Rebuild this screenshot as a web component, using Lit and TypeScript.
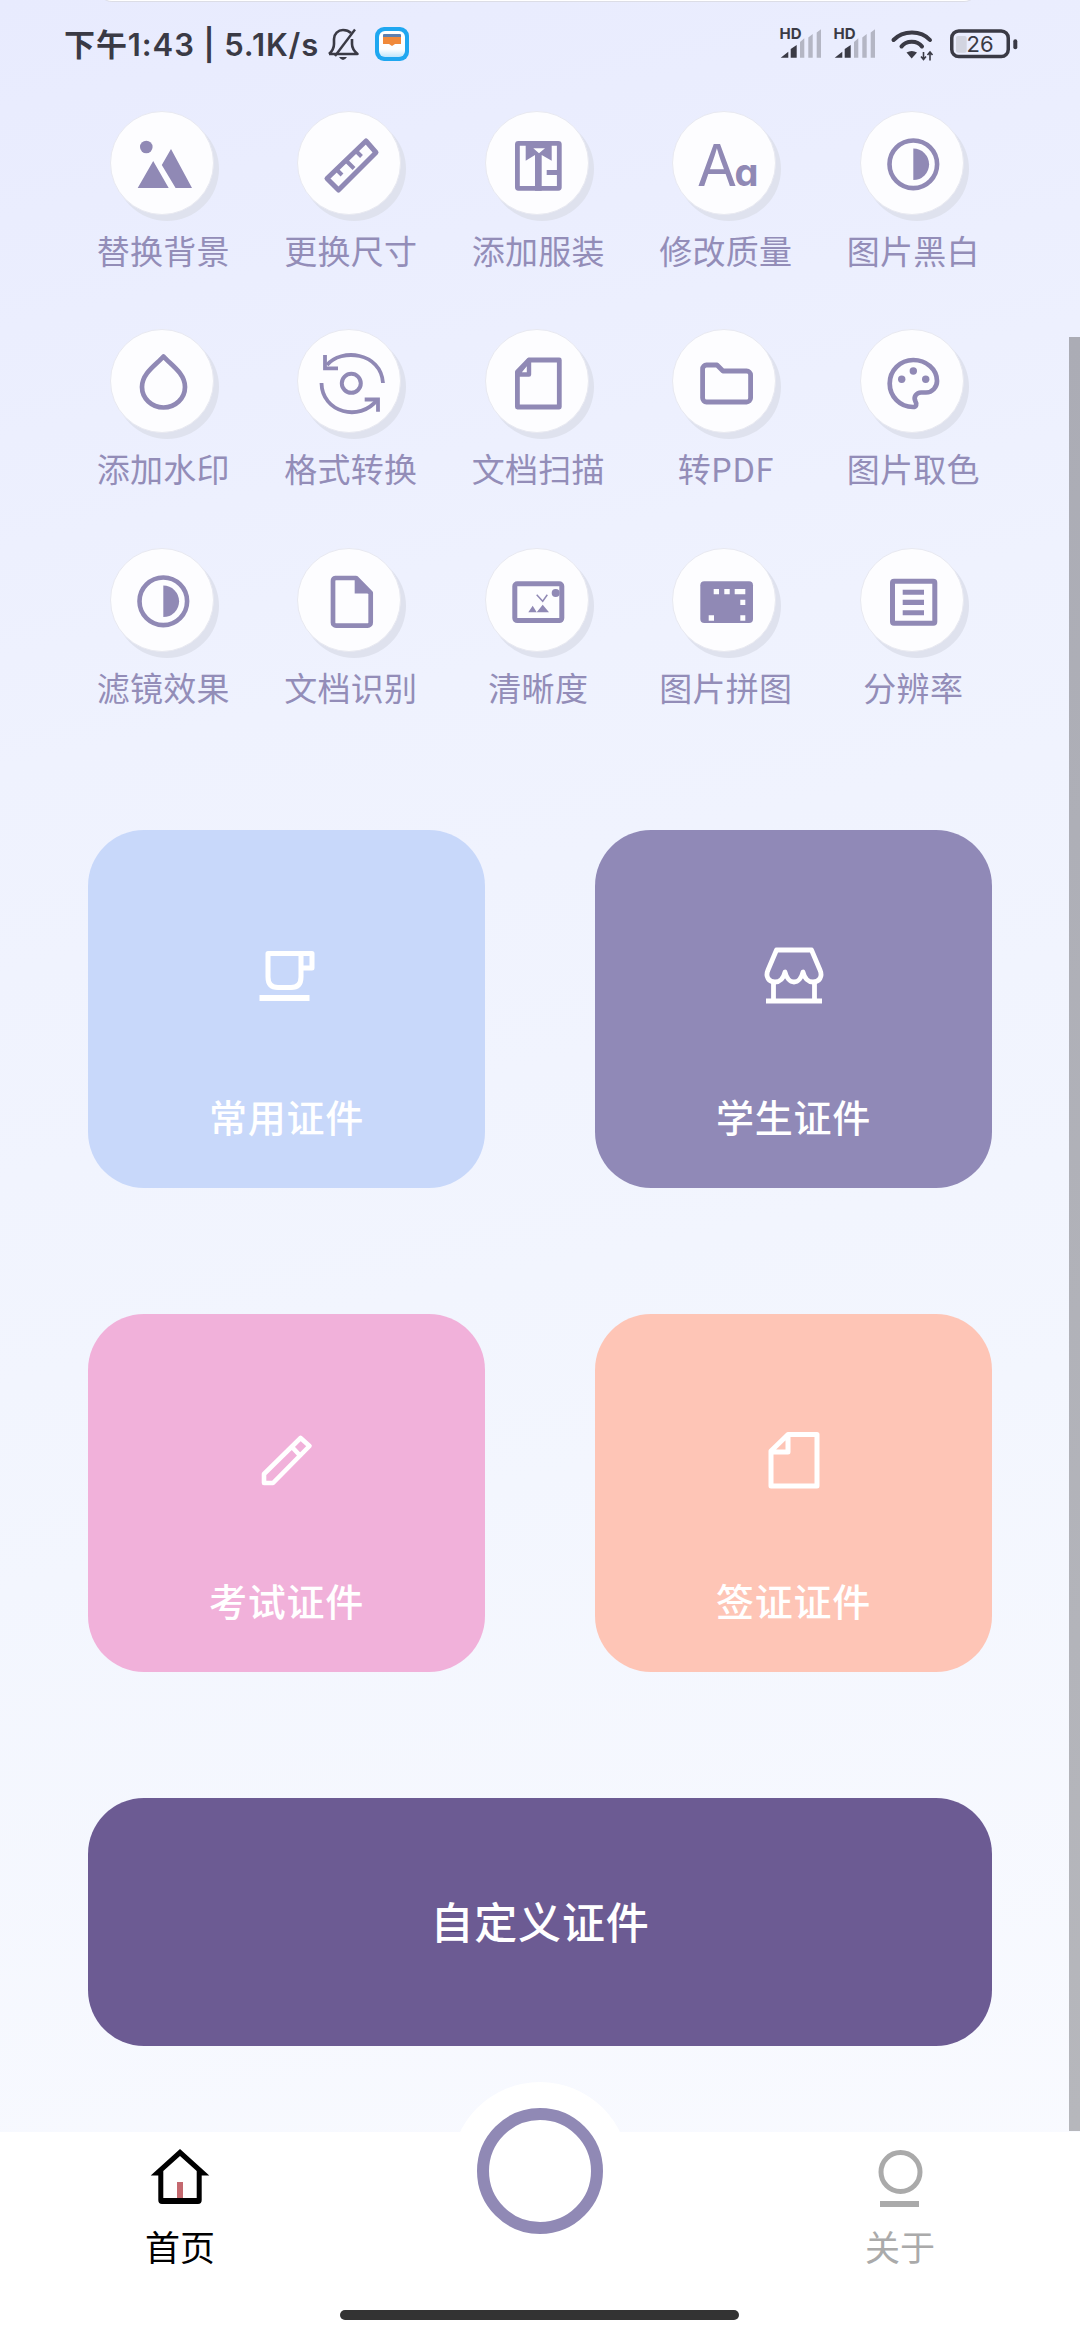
import { LitElement, html, css, svg } from 'lit';
import { customElement } from 'lit/decorators.js';

const INK = '#9089b5';

const half = svg`
  <circle cx="53.3" cy="53.3" r="23.8" fill="none" stroke=${INK} stroke-width="4.6"/>
  <path d="M53.3 37.5 A15.8 15.8 0 0 1 53.3 69.1 Z" fill=${INK}/>`;

const ICONS: Record<string, unknown> = {
  mountain: svg`
    <circle cx="36.3" cy="36" r="6.3" fill=${INK}/>
    <path d="M27.7 77 L43.2 50 L58.7 77 Z M61 38 L82 77 H65.6 L51.8 54 Z" fill=${INK}/>`,
  ruler: svg`
    <path d="M68 30 L78 41.5 L40.5 79 L29 67.5 Z" fill="none" stroke=${INK} stroke-width="5" stroke-linejoin="round"/>
    <path d="M38.5 58.5 L44 64 M48 49.5 L56 57.5 M58 40 L63.5 45.5" fill="none" stroke=${INK} stroke-width="4"/>`,
  shirt: svg`
    <rect x="32.4" y="32.4" width="41.9" height="44.9" rx="1" fill="none" stroke=${INK} stroke-width="4.8"/>
    <path fill-rule="evenodd" d="M40.7 30 H66.7 V49.7 L56.7 44 V79.7 H50 V44 L40.7 49.7 Z M48.3 37.3 L54 42.3 L60 37.3 Z" fill=${INK}/>
    <rect x="61.7" y="59" width="12" height="5" fill=${INK}/>`,
  letters: svg`
    <text class="aa" x="24" y="74.7" font-size="58" font-weight="400" fill=${INK}>A</text>
    <text class="aa" x="61.5" y="74.7" font-size="38" font-weight="700" fill=${INK}>a</text>`,
  half,
  drop: svg`
    <path d="M53.5 26.5 C60 34 75 43 75 57 A21.5 20.5 0 0 1 32 57 C32 43 47 34 53.5 26.5 Z" fill="none" stroke=${INK} stroke-width="4.7" stroke-linejoin="round"/>`,
  convert: svg`
    <circle cx="53.3" cy="53.3" r="9.5" fill="none" stroke=${INK} stroke-width="4"/>
    <path d="M29 35 C43 18 83 22 85 53 M23.5 53 C24 83 62 92 79 70" fill="none" stroke=${INK} stroke-width="3.8"/>
    <path d="M27 25 V38.3 H40 M66.7 69.5 H80 V81.7" fill="none" stroke=${INK} stroke-width="3.8"/>`,
  page: svg`
    <path d="M44 30 H74.3 V77 H32.4 V42 Z" fill="none" stroke=${INK} stroke-width="4.8" stroke-linejoin="round"/>
    <path d="M44 30 V44.5 H32.4 Z" fill="none" stroke=${INK} stroke-width="4.4" stroke-linejoin="round"/>`,
  folder: svg`
    <path d="M33.5 35 H44 L50 41 H73.5 A4 4 0 0 1 77.6 45 V68 A4 4 0 0 1 73.5 72 H33.5 A4 4 0 0 1 29.6 68 V39 A4 4 0 0 1 33.5 35 Z" fill="none" stroke=${INK} stroke-width="4.8" stroke-linejoin="round"/>`,
  palette: svg`
    <path d="M53.3 30 C40 30 29.7 40.5 29.7 53.5 C29.7 66.5 40 77 53 77 C56.5 77 57 74 55.5 71.5 C53 67 56.5 62.5 61 62.5 H66 C72.5 62.5 77 57 77 51 C77 39 66 30 53.3 30 Z" fill="none" stroke=${INK} stroke-width="4.7" stroke-linejoin="round"/>
    <circle cx="41.7" cy="49.3" r="3.7" fill=${INK}/>
    <circle cx="53.3" cy="41" r="3.7" fill=${INK}/>
    <circle cx="65.7" cy="49.3" r="3.7" fill=${INK}/>`,
  doc: svg`
    <path d="M37.5 30 H58 L72.7 45 V74.5 A3 3 0 0 1 69.7 77.6 H38 A3 3 0 0 1 35 74.5 V33 A3 3 0 0 1 37.5 30 Z" fill="none" stroke=${INK} stroke-width="4.7" stroke-linejoin="round"/>
    <path d="M56.7 28 L75 45.5 H56.7 Z" fill=${INK}/>`,
  picture: svg`
    <rect x="29.8" y="35.8" width="47" height="36.8" rx="2.5" fill="none" stroke=${INK} stroke-width="5"/>
    <circle cx="70.7" cy="45" r="4" fill=${INK}/>
    <path d="M43.3 64.3 L47.7 57.7 L51.7 64.3 Z M51.7 64.3 L57.7 56.7 L64 64.3 Z" fill=${INK}/>
    <path d="M51.7 46.7 L57.7 53.3 L62.3 46.7" fill="none" stroke=${INK} stroke-width="1.5"/>`,
  collage: svg`
    <rect x="27.3" y="33.3" width="52.7" height="41.7" rx="4" fill=${INK}/>
    <path d="M40.7 41 h5.3 v5.3 h-5.3 Z M51.3 41 h5.4 v5.3 h-5.4 Z M61.7 41 h10.6 v5.3 h-10.6 Z M67.3 51.7 h5 v5.3 h-5 Z M35.7 67.3 h5.3 v5.4 h-5.3 Z M67.3 67.3 h5 v5.4 h-5 Z" fill="#fdfdff"/>`,
  article: svg`
    <rect x="32.5" y="33.2" width="42.3" height="42" rx="1.5" fill="none" stroke=${INK} stroke-width="5"/>
    <path d="M42.7 41.7 H64 V46.7 H42.7 Z M42.7 51.7 H64 V57 H42.7 Z M42.7 62.3 H64 V67.3 H42.7 Z" fill=${INK}/>`,
};

const GLYPHS: Record<string, unknown> = {
  cup: svg`
    <path d="M13 9.5 H46 V33 Q46 43.5 36 43.5 H23 Q13 43.5 13 33 Z M46 9.5 H57 V24 H46" fill="none" stroke="#fff" stroke-width="5" stroke-linejoin="round"/>
    <rect x="4.5" y="51" width="50" height="6" fill="#fff"/>`,
  store: svg`
    <path d="M14.5 6 H49.5 L58 26 C61 33 57 38 51 38 C46 38 42.5 34 41 28 C39.5 34 36 38 32 38 C28 38 24.5 34 23 28 C21.5 34 18 38 13 38 C7 38 3 33 6 26 Z" fill="none" stroke="#fff" stroke-width="4.8" stroke-linejoin="round"/>
    <path d="M11.5 37 V56 M52.5 37 V56" fill="none" stroke="#fff" stroke-width="4.8"/>
    <rect x="4" y="54.5" width="56" height="5" fill="#fff"/>`,
  pen: svg`
    <path d="M9 55 V46 L45.6 10 L54.5 18 L18 55 Z M37 19 L44.5 27" fill="none" stroke="#fff" stroke-width="4.6" stroke-linejoin="round"/>`,
  sheet: svg`
    <path d="M26 6.5 H55 V58 H9 V23 Z M26 6.5 V24 H9" fill="none" stroke="#fff" stroke-width="5" stroke-linejoin="round"/>`,
};

const TOOLS = [
  ['替换背景', 'mountain'], ['更换尺寸', 'ruler'], ['添加服装', 'shirt'], ['修改质量', 'letters'], ['图片黑白', 'half'],
  ['添加水印', 'drop'], ['格式转换', 'convert'], ['文档扫描', 'page'], ['转PDF', 'folder'], ['图片取色', 'palette'],
  ['滤镜效果', 'half'], ['文档识别', 'doc'], ['清晰度', 'picture'], ['图片拼图', 'collage'], ['分辨率', 'article'],
];

const CARDS = [
  ['常用证件', 'cup', 'blue'],
  ['学生证件', 'store', 'violet'],
  ['考试证件', 'pen', 'pink'],
  ['签证证件', 'sheet', 'peach'],
];

@customElement('app-root')
export class AppRoot extends LitElement {
  static styles = css`
    :host {
      display: block;
      width: 1080px;
      height: 2340px;
      position: relative;
      overflow: hidden;
      background: linear-gradient(168deg, #e8ebfe 0%, #eff2fe 30%, #f3f6fe 62%, #fafbff 100%);
      font-family: "Noto Sans CJK SC", sans-serif;
    }
    .notice {
      position: absolute;
      left: 98px;
      top: -20px;
      width: 880px;
      height: 21px;
      background: #fff;
      border-bottom: 1px solid #dcdde6;
      border-radius: 0 0 14px 14px;
    }
    .scrollbar {
      position: absolute;
      right: 0;
      top: 337px;
      width: 11px;
      height: 1794px;
      background: linear-gradient(#abacb5, #b6b7bc);
    }
    .status {
      height: 90px;
      box-sizing: border-box;
      padding: 27px 61px 0 64px;
      display: flex;
      align-items: flex-start;
      color: #3a3a45;
    }
    .clock {
      width: 254px;
      font-family: Inter, "Noto Sans CJK SC", sans-serif;
      font-size: 31px;
      font-weight: 600;
      letter-spacing: 0.9px;
      line-height: 36px;
      white-space: nowrap;
    }
    .bell {
      margin-left: 8px;
      width: 34px;
      height: 34px;
    }
    .wallet {
      margin-left: 15px;
      width: 34px;
      height: 34px;
    }
    .right {
      margin-left: auto;
      display: flex;
    }
    .hd {
      width: 44px;
      height: 34px;
      margin-top: -1px;
      margin-right: 10px;
      overflow: visible;
    }
    .hd text, .battery text, .aa {
      font-family: Inter, sans-serif;
    }
    .aa {
      font-feature-settings: "cv11";
    }
    .wifi {
      width: 44px;
      height: 34px;
      margin-left: 3px;
      margin-right: 15px;
    }
    .battery {
      width: 70px;
      height: 34px;
    }
    .tools {
      margin-top: 20.5px;
      padding-left: 68px;
      display: grid;
      grid-template-columns: repeat(5, 187.5px);
      grid-auto-rows: 218.5px;
    }
    .tool {
      display: flex;
      flex-direction: column;
      align-items: center;
    }
    .disc {
      width: 104px;
      height: 104px;
      flex: none;
      box-sizing: border-box;
      border: 1px solid #e8e9f1;
      border-radius: 50%;
      background: #fdfdff;
      box-shadow: 5px 6px 0 #dfe2ee;
    }
    .disc svg {
      display: block;
      width: 103px;
      height: 103px;
      margin: -0.5px;
    }
    .tool span {
      margin-top: 13px;
      margin-left: 3px;
      font-size: 33px;
      letter-spacing: 0.3px;
      line-height: 44px;
      color: #938db8;
      white-space: nowrap;
    }
    .cards {
      margin-top: 64px;
      padding-left: 88px;
      display: grid;
      grid-template-columns: 397px 397px;
      column-gap: 110px;
      row-gap: 126px;
    }
    .card {
      height: 358px;
      box-sizing: border-box;
      padding-top: 114px;
      border-radius: 56px;
      display: flex;
      flex-direction: column;
      align-items: center;
      color: #fff;
    }
    .card svg {
      width: 64px;
      height: 64px;
      flex: none;
    }
    .card span {
      margin-top: 83px;
      font-size: 38px;
      font-weight: 500;
      letter-spacing: 0.8px;
      line-height: 50px;
    }
    .blue { background: #c8d8fa; }
    .violet { background: #9089b7; }
    .pink { background: #f1b1da; }
    .peach { background: #fec5b6; }
    .custom {
      grid-column: 1 / 3;
      height: 248px;
      box-sizing: border-box;
      padding-bottom: 4px;
      border-radius: 56px;
      background: #6c5b93;
      display: flex;
      align-items: center;
      justify-content: center;
      color: #fff;
      font-size: 43px;
      font-weight: 500;
      letter-spacing: 0.8px;
    }
    .tabbar {
      position: relative;
      margin-top: 86px;
      height: 209px;
      box-sizing: border-box;
      padding: 13px 120px 0;
      background: #fff;
      display: flex;
      justify-content: space-between;
    }
    .bump {
      position: absolute;
      left: 450.5px;
      top: -50px;
      width: 178px;
      height: 178px;
      border-radius: 50%;
      background: #fff;
    }
    .shoot {
      position: absolute;
      left: 476.5px;
      top: -24px;
      width: 126px;
      height: 126px;
      box-sizing: border-box;
      border: 12.5px solid #9089b5;
      border-radius: 50%;
      background: #fff;
    }
    .tab {
      position: relative;
      width: 120px;
      display: flex;
      flex-direction: column;
      align-items: center;
      font-size: 35px;
      line-height: 40px;
      color: #000;
    }
    .tab.off { color: #aaa; }
    .tab svg {
      width: 64px;
      height: 64px;
      margin-bottom: 17px;
    }
    .homebar {
      position: absolute;
      left: 340px;
      top: 178px;
      width: 399px;
      height: 10px;
      border-radius: 5px;
      background: #333;
    }
  `;

  private renderSignal() {
    return html`<svg class="hd" viewBox="0 0 44 34">
      <text x="0.5" y="12.5" font-size="15" font-weight="700" fill="#3a3a45">HD</text>
      <path d="M1.7 31.7 L9.3 25.7 V31.7 Z M11.7 23 L17.7 19 V31.7 H11.7 Z" fill="#3a3a45"/>
      <path d="M21 16 L25.3 12.3 V31.7 H21 Z M29.3 11.5 L33.7 8 V31.7 H29.3 Z M37.7 6.5 L42 3.3 V31.7 H37.7 Z" fill="#b4b6c4"/>
    </svg>`;
  }

  render() {
    return html`
      <div class="notice"></div>
      <div class="scrollbar"></div>
      <div class="status">
        <div class="clock">下午1:43 | 5.1K/s</div>
        <svg class="bell" viewBox="0 0 34 34">
          <path d="M3 27 C6.5 24 8 21 8 17 V12 C8 7 12 3 17 3 C20 3 23 4 25 6 M26 12 V17 C26 21 28 24 31.5 27 H3" fill="none" stroke="#3a3a45" stroke-width="2.6" stroke-linejoin="round"/>
          <path d="M29 2.5 L9 29" fill="none" stroke="#3a3a45" stroke-width="2.4"/>
          <path d="M13 30 H21 Q19 33 17 33 Q15 33 13 30 Z" fill="#3a3a45"/>
        </svg>
        <svg class="wallet" viewBox="0 0 34 34">
          <defs>
            <linearGradient id="wb" x1="0" y1="0" x2="0" y2="1">
              <stop offset="0" stop-color="#fff"/>
              <stop offset="0.7" stop-color="#fdfeff"/>
              <stop offset="1" stop-color="#bfe6fb"/>
            </linearGradient>
          </defs>
          <rect width="34" height="34" rx="9" fill="#1fa7f0"/>
          <rect x="4" y="4" width="26" height="26" rx="6" fill="url(#wb)"/>
          <path d="M8 8 Q8 7 9 7 H25 Q26 7 26 8 V10 H8 Z" fill="#5e7fae"/>
          <path d="M8 10 H26 V17 H20 L17 19 L14 17 H8 Z" fill="#f0893a"/>
        </svg>
        <div class="right">
          ${this.renderSignal()} ${this.renderSignal()}
          <svg class="wifi" viewBox="0 0 44 34">
            <path d="M3.5 13 C13 3 31 3 40 13 M11.5 19.5 C16 13 27.5 13 32 19.5" fill="none" stroke="#3a3a45" stroke-width="4" stroke-linecap="round"/>
            <path d="M16.5 25.5 Q21.7 22.5 27 25.5 L21.7 31.5 Z" fill="#3a3a45"/>
            <path d="M33.5 25 V32 M31 29.5 L33.5 32.5 L36 29.5 M40 26 V33.5 M37.5 28 L40 25 L42.5 28" fill="none" stroke="#3a3a45" stroke-width="1.6"/>
          </svg>
          <svg class="battery" viewBox="0 0 70 34">
            <rect x="7" y="9" width="10.7" height="16.7" rx="2" fill="#d2d4e0"/>
            <rect x="2.75" y="4" width="56.5" height="25.5" rx="7" fill="none" stroke="#3a3a45" stroke-width="3.5"/>
            <rect x="64.3" y="12.3" width="4" height="10" rx="2" fill="#3a3a45"/>
            <text x="31" y="25.3" text-anchor="middle" font-size="22" fill="#3a3a45">26</text>
          </svg>
        </div>
      </div>
      <div class="tools">
        ${TOOLS.map(([label, icon]) => html`
          <div class="tool">
            <div class="disc"><svg viewBox="0 0 103 103">${ICONS[icon]}</svg></div>
            <span>${label}</span>
          </div>`)}
      </div>
      <div class="cards">
        ${CARDS.map(([label, icon, tone]) => html`
          <div class="card ${tone}">
            <svg viewBox="0 0 64 64">${GLYPHS[icon]}</svg>
            <span>${label}</span>
          </div>`)}
        <div class="custom">自定义证件</div>
      </div>
      <div class="tabbar">
        <div class="bump"></div>
        <div class="shoot"></div>
        <div class="tab">
          <svg viewBox="0 0 64 64">
            <path fill-rule="evenodd" d="M32 4 L61.3 30.5 H53.7 V55 Q53.7 59 50 59 H14 Q10.3 59 10.3 55 V30.5 H2.7 Z M32 11 L15.3 26 V53 H48.7 V26 Z" fill="#000"/>
            <rect x="29" y="37" width="6" height="16" fill="#c4696f"/>
          </svg>
          首页
        </div>
        <div class="tab off">
          <svg viewBox="0 0 64 64">
            <circle cx="32.5" cy="27" r="19.5" fill="none" stroke="#aaa" stroke-width="5"/>
            <rect x="12" y="56" width="39" height="6" fill="#aaa"/>
          </svg>
          关于
        </div>
        <div class="homebar"></div>
      </div>
    `;
  }
}
